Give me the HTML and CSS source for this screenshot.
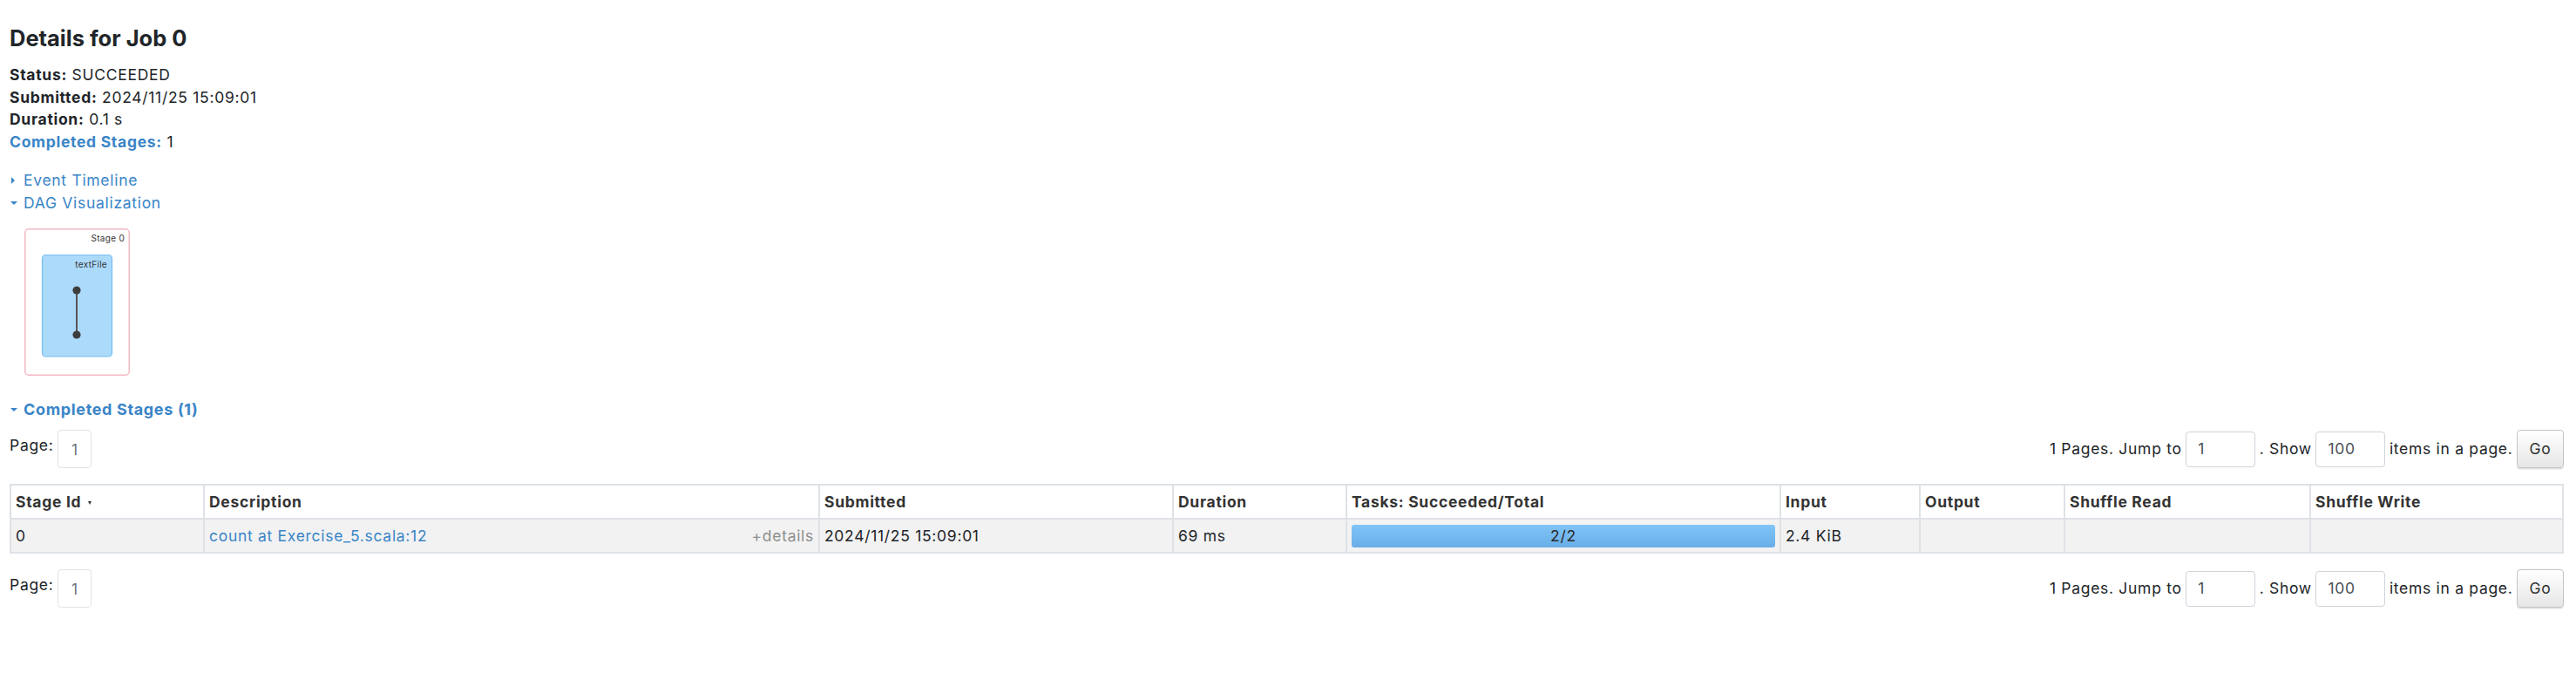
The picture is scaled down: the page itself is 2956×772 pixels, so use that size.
FILE: index.html
```html
<!DOCTYPE html>
<html lang="en">
<head>
<meta charset="utf-8">
<title>Details for Job 0</title>
<link rel="stylesheet" href="styles.css">
</head>
<body>
<div class="page">
  <h3 class="title">Details for Job 0</h3>
  <ul class="summary">
    <li><strong>Status:</strong> SUCCEEDED</li>
    <li><strong>Submitted:</strong> 2024/11/25 15:09:01</li>
    <li><strong>Duration:</strong> 0.1 s</li>
    <li><a class="link"><strong>Completed Stages:</strong></a> 1</li>
  </ul>
  <div class="toggles">
    <a class="toggle"><span class="arrow-box"><span class="arrow-closed"></span></span>Event Timeline</a>
    <a class="toggle"><span class="arrow-box"><span class="arrow-open"></span></span>DAG Visualization</a>
  </div>
  <div class="dag">
    <svg class="dag-svg" width="200" height="212" viewBox="0 0 200 212" xmlns="http://www.w3.org/2000/svg">
      <rect x="17.75" y="17.75" width="119.5" height="167.5" rx="4" ry="4" fill="#ffffff" stroke="#f3b9c4" stroke-width="1.5"/>
      <text x="132" y="32" text-anchor="end" class="dag-label">Stage 0</text>
      <rect x="37.5" y="47.5" width="80" height="116.5" rx="4" ry="4" fill="#acdafb" stroke="#78bdf1" stroke-width="1.2"/>
      <text x="112" y="62" text-anchor="end" class="dag-label">textFile</text>
      <line x1="77" y1="88" x2="77" y2="139" stroke="#555555" stroke-width="2"/>
      <circle cx="77" cy="88" r="4.6" fill="#3d3d3d"/>
      <circle cx="77" cy="139" r="4.6" fill="#3d3d3d"/>
    </svg>
  </div>
  <h4 class="section"><span class="arrow-box"><span class="arrow-open"></span></span>Completed Stages (1)</h4>

  <div class="pager">
    <div class="pager-left">
      <span class="page-label">Page:</span>
      <span class="page-box">1</span>
    </div>
    <div class="pager-right">
      <span>1 Pages. Jump to</span>
      <span class="input">1</span>
      <span>. Show</span>
      <span class="input">100</span>
      <span>items in a page.</span>
      <span class="go">Go</span>
    </div>
  </div>

  <table class="stages">
    <colgroup>
      <col class="w-id"><col class="w-desc"><col class="w-sub"><col class="w-dur"><col class="w-tasks"><col class="w-in"><col class="w-out"><col class="w-sr"><col class="w-sw">
    </colgroup>
    <thead>
      <tr>
        <th>Stage Id<span class="sort-arrow"></span></th>
        <th>Description</th>
        <th>Submitted</th>
        <th>Duration</th>
        <th>Tasks: Succeeded/Total</th>
        <th>Input</th>
        <th>Output</th>
        <th>Shuffle Read</th>
        <th>Shuffle Write</th>
      </tr>
    </thead>
    <tbody>
      <tr>
        <td>0</td>
        <td><span class="details">+details</span><a class="plain-link">count at Exercise_5.scala:12</a></td>
        <td>2024/11/25 15:09:01</td>
        <td>69 ms</td>
        <td><div class="progress">2/2</div></td>
        <td>2.4 KiB</td>
        <td></td>
        <td></td>
        <td></td>
      </tr>
    </tbody>
  </table>

  <div class="pager pager-bottom">
    <div class="pager-left">
      <span class="page-label">Page:</span>
      <span class="page-box">1</span>
    </div>
    <div class="pager-right">
      <span>1 Pages. Jump to</span>
      <span class="input">1</span>
      <span>. Show</span>
      <span class="input">100</span>
      <span>items in a page.</span>
      <span class="go">Go</span>
    </div>
  </div>
</div>
</body>
</html>
```

FILE: styles.css
```css
html, body {
  margin: 0;
  padding: 0;
  background: #ffffff;
}

body {
  font-family: Inter, "Liberation Sans", sans-serif;
  font-size: 17.5px;
  line-height: 25.6px;
  letter-spacing: 0.7px;
  color: #212529;
}

.page {
  padding: 29px 14px 40px 11px;
}

.title {
  margin: 0 0 14px 0;
  font-size: 25.5px;
  line-height: 30px;
  font-weight: 700;
  letter-spacing: 0;
  color: #212529;
}

.summary {
  list-style: none;
  margin: 0 0 18.6px 0;
  padding: 0;
}

.summary strong {
  font-weight: 700;
}

.link {
  color: #3a85c7;
  text-decoration: none;
}

.toggles {
  display: flex;
  flex-direction: column;
}

.toggle {
  display: flex;
  align-items: center;
  color: #3a85c7;
  height: 25.6px;
}

.arrow-box {
  display: inline-flex;
  align-items: center;
  width: 16px;
  height: 25.6px;
}

.arrow-closed {
  display: inline-block;
  width: 0;
  height: 0;
  margin-left: 2px;
  border-top: 4px solid transparent;
  border-bottom: 4px solid transparent;
  border-left: 4px solid #3a85c7;
}

.arrow-open {
  display: inline-block;
  width: 0;
  height: 0;
  margin-left: 1px;
  margin-top: 1px;
  border-left: 4.5px solid transparent;
  border-right: 4.5px solid transparent;
  border-top: 4.5px solid #3a85c7;
}

.dag {
  height: 212px;
}

.dag-svg {
  display: block;
}

.dag-label {
  font-family: Inter, "Liberation Sans", sans-serif;
  font-size: 10px;
  letter-spacing: 0.3px;
  fill: #333333;
}

.section {
  display: flex;
  align-items: center;
  margin: 0 0 10.5px 0;
  font-size: 18px;
  line-height: 25.6px;
  font-weight: 700;
  letter-spacing: 0.65px;
  color: #3a85c7;
}

.pager {
  display: flex;
  justify-content: space-between;
  align-items: center;
  height: 44px;
}

.pager-bottom {
  margin-top: 18px;
}

.pager-left {
  display: flex;
  align-items: flex-start;
  height: 44px;
}

.page-label {
  margin-top: 4.8px;
  margin-right: 5px;
}

.page-box {
  box-sizing: border-box;
  width: 39px;
  height: 44px;
  border: 1.5px solid #dee2e6;
  border-radius: 4px;
  color: #6c757d;
  display: flex;
  align-items: center;
  justify-content: center;
  padding-top: 2px;
}

.pager-right {
  display: flex;
  align-items: center;
  gap: 4.5px;
}

.input {
  box-sizing: border-box;
  width: 80px;
  height: 41px;
  border: 1.5px solid #ced4da;
  border-radius: 4px;
  padding-left: 13px;
  color: #495057;
  display: flex;
  align-items: center;
}

.go {
  box-sizing: border-box;
  width: 54px;
  height: 44px;
  border: 1px solid #c4c4c4;
  border-radius: 4px;
  background: linear-gradient(#ffffff, #e6e6e6);
  box-shadow: 0 1.5px 0 rgba(0, 0, 0, 0.12);
  color: #333333;
  display: flex;
  align-items: center;
  justify-content: center;
}

.stages {
  width: 100%;
  margin-top: 18px;
  border-collapse: collapse;
  table-layout: fixed;
  border: 2px solid #dee2e6;
}

.w-id { width: 222px; }
.w-desc { width: 706px; }
.w-sub { width: 406px; }
.w-dur { width: 199px; }
.w-tasks { width: 498px; }
.w-in { width: 160px; }
.w-out { width: 166px; }
.w-sr { width: 282px; }
.w-sw { width: auto; }

.stages th,
.stages td {
  border: 2px solid #dee2e6;
  height: 37px;
  padding: 0 5px;
  text-align: left;
  vertical-align: middle;
  white-space: nowrap;
  overflow: hidden;
}

.stages th {
  font-weight: 700;
  color: #333333;
  background: #ffffff;
}

.stages td {
  background: #f2f2f2;
  color: #212529;
}

.sort-arrow {
  display: inline-block;
  width: 0;
  height: 0;
  margin-left: 8px;
  vertical-align: middle;
  border-left: 2.5px solid transparent;
  border-right: 2.5px solid transparent;
  border-top: 4.5px solid #333333;
}

.plain-link {
  color: #3a85c7;
}

.details {
  float: right;
  color: #8e8e8e;
}

.progress {
  height: 26px;
  border-radius: 3px;
  background: linear-gradient(#80c5f8, #69ade8);
  text-align: center;
  line-height: 26px;
  color: #2b2b2b;
}
```
